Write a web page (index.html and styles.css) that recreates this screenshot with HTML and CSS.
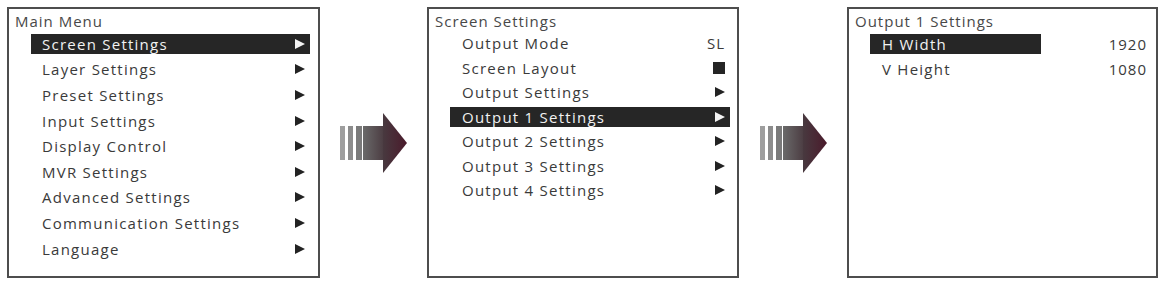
FILE: index.html
```html
<!DOCTYPE html>
<html lang="en">
<head>
<meta charset="utf-8">
<title>Menu navigation</title>
<link rel="stylesheet" href="styles.css">
</head>
<body>
<div class="stage">
  <section class="panel p-main">
    <div class="title">Main Menu</div>
    <ul class="rows">
      <li class="row sel"><span class="label">Screen Settings</span><svg class="tri" viewBox="0 0 10 10"><polygon points="0,0 10,5 0,10"/></svg></li>
      <li class="row"><span class="label">Layer Settings</span><svg class="tri" viewBox="0 0 10 10"><polygon points="0,0 10,5 0,10"/></svg></li>
      <li class="row"><span class="label">Preset Settings</span><svg class="tri" viewBox="0 0 10 10"><polygon points="0,0 10,5 0,10"/></svg></li>
      <li class="row"><span class="label">Input Settings</span><svg class="tri" viewBox="0 0 10 10"><polygon points="0,0 10,5 0,10"/></svg></li>
      <li class="row"><span class="label">Display Control</span><svg class="tri" viewBox="0 0 10 10"><polygon points="0,0 10,5 0,10"/></svg></li>
      <li class="row"><span class="label">MVR Settings</span><svg class="tri" viewBox="0 0 10 10"><polygon points="0,0 10,5 0,10"/></svg></li>
      <li class="row"><span class="label">Advanced Settings</span><svg class="tri" viewBox="0 0 10 10"><polygon points="0,0 10,5 0,10"/></svg></li>
      <li class="row"><span class="label">Communication Settings</span><svg class="tri" viewBox="0 0 10 10"><polygon points="0,0 10,5 0,10"/></svg></li>
      <li class="row"><span class="label">Language</span><svg class="tri" viewBox="0 0 10 10"><polygon points="0,0 10,5 0,10"/></svg></li>
    </ul>
  </section>

  <div class="gap">
    <svg class="next" viewBox="0 0 67 60">
      <defs>
        <linearGradient id="g1" x1="0" y1="0" x2="1" y2="0">
          <stop offset="0" stop-color="#6a6a6a"/>
          <stop offset="1" stop-color="#4a3a40"/>
        </linearGradient>
        <linearGradient id="g2" x1="0" y1="0" x2="1" y2="0">
          <stop offset="0" stop-color="#48393f"/>
          <stop offset="1" stop-color="#4a1a2b"/>
        </linearGradient>
      </defs>
      <rect x="0" y="13" width="5" height="34" fill="#9e9e9e"/>
      <rect x="8" y="13" width="5" height="34" fill="#8c8c8c"/>
      <rect x="16" y="13" width="6" height="34" fill="#7a7a7a"/>
      <rect x="23" y="13" width="22" height="34" fill="url(#g1)"/>
      <polygon points="43,0 67,30 43,60" fill="url(#g2)"/>
    </svg>
  </div>

  <section class="panel p-screen">
    <div class="title">Screen Settings</div>
    <ul class="rows">
      <li class="row"><span class="label">Output Mode</span><span class="val">SL</span></li>
      <li class="row"><span class="label">Screen Layout</span><span class="sq"></span></li>
      <li class="row"><span class="label">Output Settings</span><svg class="tri" viewBox="0 0 10 10"><polygon points="0,0 10,5 0,10"/></svg></li>
      <li class="row sel"><span class="label">Output 1 Settings</span><svg class="tri" viewBox="0 0 10 10"><polygon points="0,0 10,5 0,10"/></svg></li>
      <li class="row"><span class="label">Output 2 Settings</span><svg class="tri" viewBox="0 0 10 10"><polygon points="0,0 10,5 0,10"/></svg></li>
      <li class="row"><span class="label">Output 3 Settings</span><svg class="tri" viewBox="0 0 10 10"><polygon points="0,0 10,5 0,10"/></svg></li>
      <li class="row"><span class="label">Output 4 Settings</span><svg class="tri" viewBox="0 0 10 10"><polygon points="0,0 10,5 0,10"/></svg></li>
    </ul>
  </section>

  <div class="gap gap-wide">
    <svg class="next" viewBox="0 0 67 60">
      <rect x="0" y="13" width="5" height="34" fill="#9e9e9e"/>
      <rect x="8" y="13" width="5" height="34" fill="#8c8c8c"/>
      <rect x="16" y="13" width="6" height="34" fill="#7a7a7a"/>
      <rect x="23" y="13" width="22" height="34" fill="url(#g1)"/>
      <polygon points="43,0 67,30 43,60" fill="url(#g2)"/>
    </svg>
  </div>

  <section class="panel p-output">
    <div class="title">Output 1 Settings</div>
    <ul class="rows">
      <li class="row"><span class="cell sel"><span class="label">H Width</span></span><span class="val">1920</span></li>
      <li class="row"><span class="cell"><span class="label">V Height</span></span><span class="val">1080</span></li>
    </ul>
  </section>
</div>
</body>
</html>
```

FILE: styles.css
```css
html, body {
  margin: 0;
  padding: 0;
  background: #ffffff;
}

body {
  font-family: "Open Sans", "Noto Sans", "Liberation Sans", sans-serif;
  font-size: 15px;
  font-weight: 500;
  letter-spacing: 1.25px;
  color: #3a3a3a;
}

.stage {
  display: flex;
  align-items: flex-start;
  padding: 7px 0 0 7px;
  width: 1165px;
  height: 284px;
  box-sizing: border-box;
  overflow: hidden;
}

.panel {
  box-sizing: border-box;
  width: 313px;
  height: 271px;
  border: 2px solid #4d4d4d;
}

.p-screen { width: 312px; }
.p-output { width: 311px; }

.title {
  line-height: 20px;
  padding: 2px 0 0 6px;
  color: #484848;
  font-weight: 400;
  letter-spacing: 1px;
  white-space: nowrap;
}

.rows {
  list-style: none;
  margin: 0;
  padding: 0;
}

.row {
  display: flex;
  align-items: center;
  height: 25.6px;
  margin: 0 8px 0 22px;
  white-space: nowrap;
}

.p-screen .row {
  height: 24.5px;
  margin: 0 7px 0 21px;
}

.p-output .row {
  height: 25px;
  margin: 0 9px 0 21px;
}

.label {
  flex: 1;
  padding-left: 11px;
  line-height: 20px;
}

.p-screen .label { padding-left: 12px; }

.row.sel {
  background: linear-gradient(#262626, #262626) center / 100% 20px no-repeat;
  color: #f2f2f2;
}

.tri {
  width: 10px;
  height: 10px;
  margin-right: 5px;
  fill: #232323;
}

.sel .tri { fill: #f4f4f4; }

.val {
  margin-right: 5px;
  color: #3a3a3a;
  letter-spacing: 1px;
}

.p-output .val { margin-right: 0; }

.sq {
  width: 12px;
  height: 12px;
  margin-right: 5px;
  background: #252525;
}

.cell {
  display: flex;
  align-items: center;
  width: 171px;
  height: 20px;
  margin-right: auto;
}

.cell .label { padding-left: 12px; }

.cell.sel {
  background: #262626;
  color: #f2f2f2;
}

.gap {
  width: 107px;
  height: 271px;
  display: flex;
  align-items: flex-start;
  justify-content: center;
}

.gap-wide { width: 108px; }

.next {
  width: 67px;
  height: 60px;
  margin-top: 106px;
}
```
